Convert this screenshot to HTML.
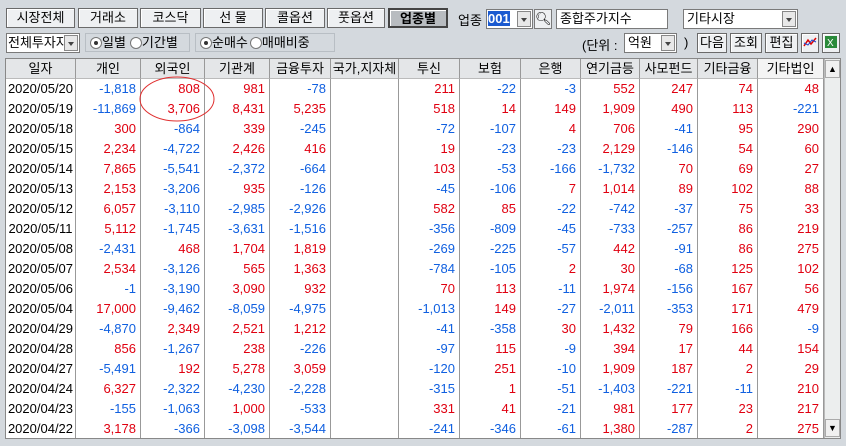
<!DOCTYPE html>
<html><head><meta charset="utf-8"><style>
*{box-sizing:border-box;margin:0;padding:0}
body{width:846px;height:446px;background:#d4d9de;font-family:"Liberation Sans","Noto Sans CJK KR",sans-serif;font-size:13px;color:#000;position:relative;overflow:hidden}
.a{position:absolute}
.btn{position:absolute;height:20px;background:#eef0f2;border:1px solid #6a6a6a;box-shadow:inset 1px 1px #fff;text-align:center;line-height:18px;font-size:13px}
.btn.on{background:#b8bcc0;font-weight:bold;border:2px solid #444}
.box{position:absolute;background:#fff;border:1px solid #7a7a7a;height:20px;line-height:18px;padding-left:3px}
.dd{position:absolute;width:14px;height:16px;background:#e8e8e8;border:1px solid #888;top:1px;right:1px}
.dd:after{content:"";position:absolute;left:3px;top:6px;border:3px solid transparent;border-top:4px solid #444}
.grp{position:absolute;height:19px;border:1px solid #b8bec4;line-height:17px;padding-left:4px}
.r{display:inline-block;width:12px;height:12px;border:1px solid #777;border-radius:50%;background:#fff;vertical-align:-2px;position:relative}
.r.c:after{content:"";position:absolute;left:3px;top:3px;width:4px;height:4px;border-radius:50%;background:#333}
#tbl{position:absolute;left:5px;top:58px;width:836px;height:381px;background:#fff;border:1px solid #888}
.hd{position:absolute;top:0;height:20px;background:#e4e6e8;border-right:1px solid #999;border-bottom:1px solid #bbb;text-align:center;line-height:19px}
.vl{position:absolute;top:20px;bottom:0;width:1px;background:#999}
.row{position:absolute;left:0;height:20px;line-height:20px;width:818px}
.row span{position:absolute;text-align:right;padding-right:4px}
.b{color:#1060e0}.d{color:#e00010}
</style></head><body>
<div class="btn" style="left:6px;top:8px;width:69px">시장전체</div>
<div class="btn" style="left:78px;top:8px;width:60px">거래소</div>
<div class="btn" style="left:140px;top:8px;width:61px">코스닥</div>
<div class="btn" style="left:203px;top:8px;width:60px">선 물</div>
<div class="btn" style="left:265px;top:8px;width:60px">콜옵션</div>
<div class="btn" style="left:327px;top:8px;width:58px">풋옵션</div>
<div class="btn on" style="left:388px;top:8px;width:60px">업종별</div>
<div class="a" style="left:458px;top:10px">업종</div>
<div class="box" style="left:486px;top:9px;width:47px;padding-left:1px"><span style="background:#1a5ad0;color:#fff;font-weight:bold">001</span><div class="dd"></div></div>
<div class="box" style="left:534px;top:9px;width:18px;background:#eef0f2;padding:0;text-align:center">🔍︎</div>
<div class="box" style="left:556px;top:9px;width:112px">종합주가지수</div>
<div class="box" style="left:683px;top:9px;width:115px">기타시장<div class="dd"></div></div>
<div class="box" style="left:6px;top:33px;width:74px;height:20px;padding-left:1px;overflow:hidden;white-space:nowrap">전체투자자<div class="dd"></div></div>
<div class="grp" style="left:85px;top:33px;width:105px"><span class="r c"></span>일별<span class="r" style="margin-left:4px"></span>기간별</div>
<div class="grp" style="left:195px;top:33px;width:140px"><span class="r c"></span>순매수<span class="r" style="margin-left:2px"></span>매매비중</div>
<div class="a" style="left:582px;top:35px">(단위 :</div>
<div class="box" style="left:624px;top:33px;width:53px">억원<div class="dd"></div></div>
<div class="a" style="left:684px;top:35px">)</div>
<div class="btn" style="left:697px;top:33px;width:30px">다음</div>
<div class="btn" style="left:730px;top:33px;width:32px">조회</div>
<div class="btn" style="left:765px;top:33px;width:33px">편집</div>
<div class="btn" style="left:801px;top:33px;width:18px;padding:0"><svg width="16" height="16"><polyline points="2,12 6,6 9,10 14,4" fill="none" stroke="#d00" stroke-width="1.5"/><polyline points="2,9 6,11 10,6 14,8" fill="none" stroke="#24c" stroke-width="1"/></svg></div>
<div class="btn" style="left:822px;top:33px;width:18px;padding:0"><svg width="16" height="16"><rect x="2" y="2" width="12" height="12" fill="#2a8a3a"/><text x="4" y="12" font-size="10" fill="#fff" font-family="Liberation Sans">X</text></svg></div>
<div id="tbl">
<div class="hd" style="left:0;width:70px">일자</div>
<div class="hd" style="left:70px;width:65px">개인</div>
<div class="hd" style="left:135px;width:64px">외국인</div>
<div class="hd" style="left:199px;width:65px">기관계</div>
<div class="hd" style="left:264px;width:61px">금융투자</div>
<div class="hd" style="left:325px;width:68px;white-space:nowrap">국가,지자체</div>
<div class="hd" style="left:393px;width:61px">투신</div>
<div class="hd" style="left:454px;width:61px">보험</div>
<div class="hd" style="left:515px;width:60px">은행</div>
<div class="hd" style="left:575px;width:59px">연기금등</div>
<div class="hd" style="left:634px;width:58px">사모펀드</div>
<div class="hd" style="left:692px;width:60px">기타금융</div>
<div class="hd" style="left:752px;width:66px;background:#f4f4f4">기타법인</div>
<div class="a" style="left:818px;top:0;width:16px;bottom:0;background:#eceeee;border-left:1px solid #bbb"></div>
<div class="a" style="left:819px;top:1px;width:15px;height:18px;background:#f0f0f0;border:1px solid #aaa;text-align:center;font-size:9px;line-height:16px">▲</div>
<div class="a" style="left:819px;bottom:1px;width:15px;height:18px;background:#f0f0f0;border:1px solid #aaa;text-align:center;font-size:9px;line-height:16px">▼</div>
<div class="vl" style="left:69px"></div><div class="vl" style="left:134px"></div><div class="vl" style="left:198px"></div><div class="vl" style="left:263px"></div><div class="vl" style="left:324px"></div><div class="vl" style="left:392px"></div><div class="vl" style="left:453px"></div><div class="vl" style="left:514px"></div><div class="vl" style="left:574px"></div><div class="vl" style="left:633px"></div><div class="vl" style="left:691px"></div><div class="vl" style="left:751px"></div><div class="vl" style="left:817px"></div>
<div id="rows"></div>
</div>
<svg class="a" style="left:136px;top:75px" width="82" height="50"><ellipse cx="41" cy="24" rx="37" ry="22" fill="none" stroke="#e03030" stroke-width="1"/></svg>
<script>
var d=[
["2020/05/20","-1,818","808","981","-78","","211","-22","-3","552","247","74","48"],
["2020/05/19","-11,869","3,706","8,431","5,235","","518","14","149","1,909","490","113","-221"],
["2020/05/18","300","-864","339","-245","","-72","-107","4","706","-41","95","290"],
["2020/05/15","2,234","-4,722","2,426","416","","19","-23","-23","2,129","-146","54","60"],
["2020/05/14","7,865","-5,541","-2,372","-664","","103","-53","-166","-1,732","70","69","27"],
["2020/05/13","2,153","-3,206","935","-126","","-45","-106","7","1,014","89","102","88"],
["2020/05/12","6,057","-3,110","-2,985","-2,926","","582","85","-22","-742","-37","75","33"],
["2020/05/11","5,112","-1,745","-3,631","-1,516","","-356","-809","-45","-733","-257","86","219"],
["2020/05/08","-2,431","468","1,704","1,819","","-269","-225","-57","442","-91","86","275"],
["2020/05/07","2,534","-3,126","565","1,363","","-784","-105","2","30","-68","125","102"],
["2020/05/06","-1","-3,190","3,090","932","","70","113","-11","1,974","-156","167","56"],
["2020/05/04","17,000","-9,462","-8,059","-4,975","","-1,013","149","-27","-2,011","-353","171","479"],
["2020/04/29","-4,870","2,349","2,521","1,212","","-41","-358","30","1,432","79","166","-9"],
["2020/04/28","856","-1,267","238","-226","","-97","115","-9","394","17","44","154"],
["2020/04/27","-5,491","192","5,278","3,059","","-120","251","-10","1,909","187","2","29"],
["2020/04/24","6,327","-2,322","-4,230","-2,228","","-315","1","-51","-1,403","-221","-11","210"],
["2020/04/23","-155","-1,063","1,000","-533","","331","41","-21","981","177","23","217"],
["2020/04/22","3,178","-366","-3,098","-3,544","","-241","-346","-61","1,380","-287","2","275"]];
var L=[0,70,135,199,264,325,393,454,515,575,634,692,752,818],h="";
d.forEach(function(r,i){h+='<div class="row" style="top:'+(20+i*20)+'px">';
r.forEach(function(v,j){var c=j==0?'':(v.charAt(0)=='-'?'b':'d');h+='<span class="'+c+'" style="left:'+L[j]+'px;width:'+(L[j+1]-L[j]-1)+'px'+(j==0?';text-align:center;padding:0':'')+'">'+v+'</span>';});h+='</div>';});
document.getElementById('rows').innerHTML=h;
</script>
</body></html>
